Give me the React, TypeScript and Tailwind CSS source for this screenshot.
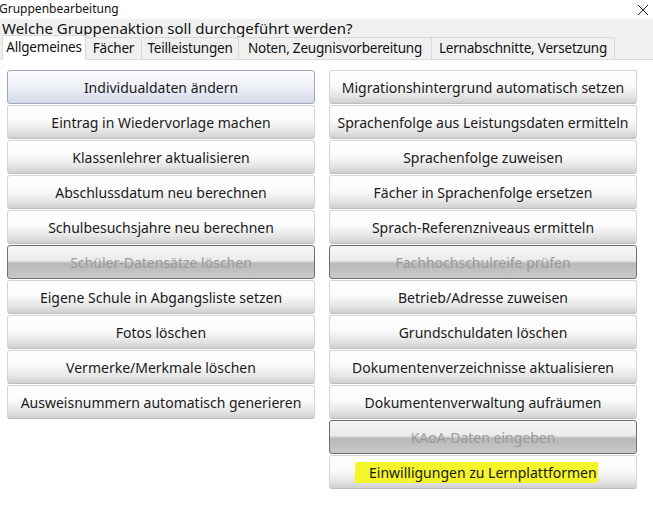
import React from "react";

type Btn = { label: string; state?: "focus" | "disabled" | "mark" };

const left: Btn[] = [
  { label: "Individualdaten ändern", state: "focus" },
  { label: "Eintrag in Wiedervorlage machen" },
  { label: "Klassenlehrer aktualisieren" },
  { label: "Abschlussdatum neu berechnen" },
  { label: "Schulbesuchsjahre neu berechnen" },
  { label: "Schüler-Datensätze löschen", state: "disabled" },
  { label: "Eigene Schule in Abgangsliste setzen" },
  { label: "Fotos löschen" },
  { label: "Vermerke/Merkmale löschen" },
  { label: "Ausweisnummern automatisch generieren" },
];

const right: Btn[] = [
  { label: "Migrationshintergrund automatisch setzen" },
  { label: "Sprachenfolge aus Leistungsdaten ermitteln" },
  { label: "Sprachenfolge zuweisen" },
  { label: "Fächer in Sprachenfolge ersetzen" },
  { label: "Sprach-Referenzniveaus ermitteln" },
  { label: "Fachhochschulreife prüfen", state: "disabled" },
  { label: "Betrieb/Adresse zuweisen" },
  { label: "Grundschuldaten löschen" },
  { label: "Dokumentenverzeichnisse aktualisieren" },
  { label: "Dokumentenverwaltung aufräumen" },
  { label: "KAoA-Daten eingeben", state: "disabled" },
  { label: "Einwilligungen zu Lernplattformen", state: "mark" },
];

const tabs = [
  { label: "Fächer", w: "w-[57px]" },
  { label: "Teilleistungen", w: "w-[98px]" },
  { label: "Noten, Zeugnisvorbereitung", w: "w-[194px]" },
  { label: "Lernabschnitte, Versetzung", w: "w-[184px]" },
];

function ActionButton({ label, state }: Btn) {
  if (state === "disabled") {
    return (
      <div className="h-[34px] rounded-[3px] border border-[#6f6f6f] bg-[linear-gradient(#f6f6f6_0%,#ececec_45%,#b9b9b9_55%,#c9c9c9_100%)] flex items-center justify-center text-[#9a9a9a] text-[14px]">
        {label}
      </div>
    );
  }
  if (state === "focus") {
    return (
      <div className="h-[34px] rounded-[3px] border border-[#a3a6c2] bg-[linear-gradient(#fbfcfe_0%,#eef0f8_50%,#d6d9e8_100%)] flex items-center justify-center text-[#1a1a1a] text-[14px]">
        {label}
      </div>
    );
  }
  return (
    <div className="h-[34px] rounded-[3px] border border-[#d4d4d4] border-b-[#bdbdbd] bg-[linear-gradient(#ffffff_0%,#fbfbfb_45%,#e4e4e4_80%,#cfcfcf_100%)] flex items-center justify-center text-[#1a1a1a] text-[14px]">
      {state === "mark" ? (
        <span className="bg-[#f4f52a] pl-[14px] pr-[1px] -skew-x-3 inline-block leading-[21px] -ml-[14px]">
          <span className="inline-block skew-x-3">{label}</span>
        </span>
      ) : (
        label
      )}
    </div>
  );
}

export default function App() {
  return (
    <div className="w-[653px] h-[508px] bg-white overflow-hidden font-['Noto_Sans',sans-serif] relative">
      <div className="h-[18px] flex items-center justify-between pr-[4px]">
        <span className="text-[12px] text-[#111] -ml-[1px] leading-[14px]">Gruppenbearbeitung</span>
        <svg width="12" height="12" viewBox="0 0 12 12" className="mt-[1px]">
          <path d="M1 1 L11 11 M11 1 L1 11" stroke="#222" strokeWidth="1" />
        </svg>
      </div>
      <div className="bg-[#f0f0f0] h-[19px] flex items-end pl-[2px] border-t border-[#fafafa]">
        <span className="text-[15px] text-[#111] leading-[18px]">Welche Gruppenaktion soll durchgeführt werden?</span>
      </div>
      <div className="bg-[#f0f0f0] h-[23px] flex items-end pl-[2px] border-b border-[#dadada]">
        <div className="w-[84px] h-[25px] -mb-[1px] bg-white border border-[#d9d9d9] border-b-white flex items-center justify-center whitespace-nowrap text-[13.5px] tracking-[-0.2px] text-[#111] relative z-10">
          Allgemeines
        </div>
        {tabs.map((t) => (
          <div
            key={t.label}
            className={`${t.w} h-[22px] bg-[#f0f0f0] border border-[#d9d9d9] border-b-0 -ml-px flex items-center justify-center whitespace-nowrap text-[13.5px] tracking-[-0.2px] text-[#111]`}
          >
            {t.label}
          </div>
        ))}
      </div>
      <div className="flex gap-[14px] pl-[7px] pt-[10px]">
        <div className="w-[308px] flex flex-col gap-[1px]">
          {left.map((b) => (
            <ActionButton key={b.label} {...b} />
          ))}
        </div>
        <div className="w-[308px] flex flex-col gap-[1px]">
          {right.map((b) => (
            <ActionButton key={b.label} {...b} />
          ))}
        </div>
      </div>
    </div>
  );
}
